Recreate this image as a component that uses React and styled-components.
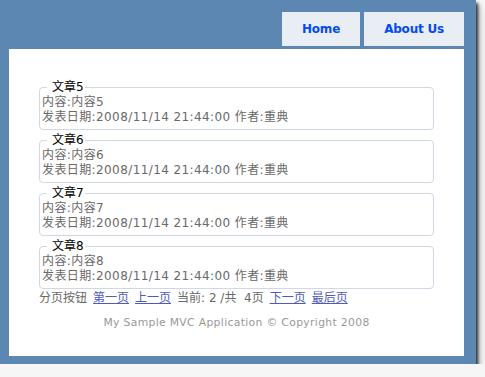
import React from 'react';
import styled, { createGlobalStyle } from 'styled-components';

const GlobalStyle = createGlobalStyle`
  html, body {
    margin: 0;
    padding: 0;
    background: #f6f6f6;
  }
  body {
    font-family: "DejaVu Sans", Verdana, "Noto Sans CJK SC", sans-serif;
    font-size: 12px;
    color: #696969;
  }
`;

const Frame = styled.div`
  width: 476px;
  height: 364px;
  box-sizing: border-box;
  background-color: #5c87b2;
  padding: 12px 12px 9px 9px;
  box-shadow: 2px 3px 3px rgba(0, 0, 0, 0.75), 4px 6px 6px rgba(0, 0, 0, 0.25);
`;

const Menu = styled.ul`
  display: flex;
  justify-content: flex-end;
  gap: 4px;
  list-style: none;
  margin: 0 0 3px;
  padding: 0;
`;

const MenuLink = styled.a`
  display: block;
  padding: 10px 20px;
  line-height: 14px;
  font-weight: bold;
  letter-spacing: -0.2px;
  background-color: #e8eef4;
  color: #034af3;
  text-decoration: none;
`;

const Main = styled.div`
  background-color: #fff;
  padding: 30px 30px 15px 30px;
`;

const Article = styled.fieldset`
  margin: 0 0 2px;
  padding: 0 2px 4px 2px;
  min-width: 0;
  border: 1px solid #d0d7e5;
  border-radius: 4px;
  line-height: 15px;
`;

const Title = styled.legend`
  margin-left: 5px;
  padding: 0 1px 0 5px;
  line-height: 16px;
  font-weight: normal;
  color: #000;
`;

const Line = styled.div`
  white-space: nowrap;
  letter-spacing: 0.4px;
`;

const Pager = styled.div`
  display: flex;
  gap: 6px;
  margin-top: 2px;
  line-height: 15px;
  white-space: pre;
`;

const PageLink = styled.a`
  color: #505abc;
  text-decoration: underline;
`;

const Footer = styled.div`
  color: #999;
  padding: 10px 0 11px;
  text-align: center;
  font-size: 10.8px;
  line-height: 14px;
  letter-spacing: 0.33px;
`;

const articles = [5, 6, 7, 8];

const App = () => {
  return (
    <>
      <GlobalStyle />
      <Frame>
        <Menu>
          <li><MenuLink href="#">Home</MenuLink></li>
          <li><MenuLink href="#">About Us</MenuLink></li>
        </Menu>
        <Main>
          {articles.map((n) => (
            <Article key={n}>
              <Title>文章{n}</Title>
              <Line>内容:内容{n}</Line>
              <Line>发表日期:2008/11/14 21:44:00 作者:重典</Line>
            </Article>
          ))}
          <Pager>
            <span>分页按钮</span>
            <PageLink href="#">第一页</PageLink>
            <PageLink href="#">上一页</PageLink>
            <span>当前: 2 /共  4页</span>
            <PageLink href="#">下一页</PageLink>
            <PageLink href="#">最后页</PageLink>
          </Pager>
          <Footer>My Sample MVC Application © Copyright 2008</Footer>
        </Main>
      </Frame>
    </>
  );
};

export default App;
